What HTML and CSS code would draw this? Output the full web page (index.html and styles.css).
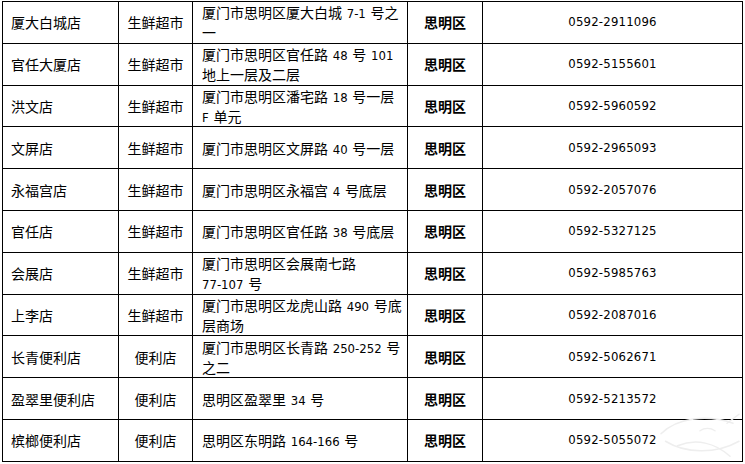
FILE: index.html
```html
<!DOCTYPE html>
<html lang="zh-CN">
<head>
<meta charset="utf-8">
<title>门店列表</title>
<link rel="stylesheet" href="styles.css">
</head>
<body>
<div class="sheet">
  <table class="stores">
    <colgroup>
      <col class="c-name"><col class="c-type"><col class="c-addr"><col class="c-dist"><col class="c-phone">
    </colgroup>
    <tbody>
      <tr><td class="name">厦大白城店</td><td class="type">生鲜超市</td><td class="addr">厦门市思明区厦大白城<span class="num"> 7-1 </span>号之<br>一</td><td class="dist">思明区</td><td class="phone">0592-2911096</td></tr>
      <tr><td class="name">官任大厦店</td><td class="type">生鲜超市</td><td class="addr">厦门市思明区官任路<span class="num"> 48 </span>号<span class="num"> 101</span><br>地上一层及二层</td><td class="dist">思明区</td><td class="phone">0592-5155601</td></tr>
      <tr><td class="name">洪文店</td><td class="type">生鲜超市</td><td class="addr">厦门市思明区潘宅路<span class="num"> 18 </span>号一层<br><span class="num">F </span>单元</td><td class="dist">思明区</td><td class="phone">0592-5960592</td></tr>
      <tr><td class="name">文屏店</td><td class="type">生鲜超市</td><td class="addr">厦门市思明区文屏路<span class="num"> 40 </span>号一层</td><td class="dist">思明区</td><td class="phone">0592-2965093</td></tr>
      <tr><td class="name">永福宫店</td><td class="type">生鲜超市</td><td class="addr">厦门市思明区永福宫<span class="num"> 4 </span>号底层</td><td class="dist">思明区</td><td class="phone">0592-2057076</td></tr>
      <tr><td class="name">官任店</td><td class="type">生鲜超市</td><td class="addr">厦门市思明区官任路<span class="num"> 38 </span>号底层</td><td class="dist">思明区</td><td class="phone">0592-5327125</td></tr>
      <tr><td class="name">会展店</td><td class="type">生鲜超市</td><td class="addr">厦门市思明区会展南七路<br><span class="num">77-107 </span>号</td><td class="dist">思明区</td><td class="phone">0592-5985763</td></tr>
      <tr><td class="name">上李店</td><td class="type">生鲜超市</td><td class="addr">厦门市思明区龙虎山路<span class="num"> 490 </span>号底<br>层商场</td><td class="dist">思明区</td><td class="phone">0592-2087016</td></tr>
      <tr><td class="name">长青便利店</td><td class="type">便利店</td><td class="addr">厦门市思明区长青路<span class="num"> 250-252 </span>号<br>之二</td><td class="dist">思明区</td><td class="phone">0592-5062671</td></tr>
      <tr><td class="name">盈翠里便利店</td><td class="type">便利店</td><td class="addr">思明区盈翠里<span class="num"> 34 </span>号</td><td class="dist">思明区</td><td class="phone">0592-5213572</td></tr>
      <tr><td class="name">槟榔便利店</td><td class="type">便利店</td><td class="addr">思明区东明路<span class="num"> 164-166 </span>号</td><td class="dist">思明区</td><td class="phone">0592-5055072</td></tr>
    </tbody>
  </table>
  <svg class="watermark" width="90" height="55" viewBox="0 0 120 70" aria-hidden="true">
    <g fill="none" stroke="#eeeeee" stroke-width="2" stroke-linecap="round">
      <path d="M8 34 C30 12, 70 8, 104 20"/>
      <path d="M14 44 C40 60, 80 62, 112 44"/>
      <path d="M30 50 C55 40, 80 46, 100 64"/>
      <path d="M96 20 L112 8"/>
      <path d="M60 30 C66 26, 74 26, 80 30"/>
    </g>
  </svg>
</div>
</body>
</html>
```

FILE: styles.css
```css
html, body {
  margin: 0;
  padding: 0;
  background: #fff;
}

.sheet {
  position: relative;
  padding: 1px 0 0 2px;
  width: 745px;
  height: 464px;
  box-sizing: border-box;
  overflow: hidden;
}

.stores {
  border-collapse: collapse;
  table-layout: fixed;
  width: 741px;
  font-family: "Noto Sans CJK SC", sans-serif;
  font-size: 14px;
  color: #000;
}

.c-name { width: 116px; }
.c-type { width: 74px; }
.c-addr { width: 215px; }
.c-dist { width: 75px; }
.c-phone { width: 260px; }

.stores tr {
  height: 41.8px;
}

.stores td {
  border: 1px solid #000;
  padding: 0;
  line-height: 20px;
  vertical-align: middle;
  white-space: nowrap;
}

.name {
  padding-left: 8px !important;
  text-align: left;
}

.type {
  text-align: center;
}

.addr {
  padding-left: 9px !important;
  text-align: left;
}

.dist {
  text-align: center;
  font-weight: 700;
}

.phone {
  text-align: center;
  font-family: "DejaVu Sans Condensed", "DejaVu Sans", sans-serif;
  font-size: 13px;
  letter-spacing: 0.2px;
}

.num {
  font-family: "DejaVu Sans Condensed", "DejaVu Sans", sans-serif;
  font-size: 13px;
  line-height: 1;
  word-spacing: 1px;
}

.watermark {
  position: absolute;
  right: 0;
  bottom: 2px;
}
```
